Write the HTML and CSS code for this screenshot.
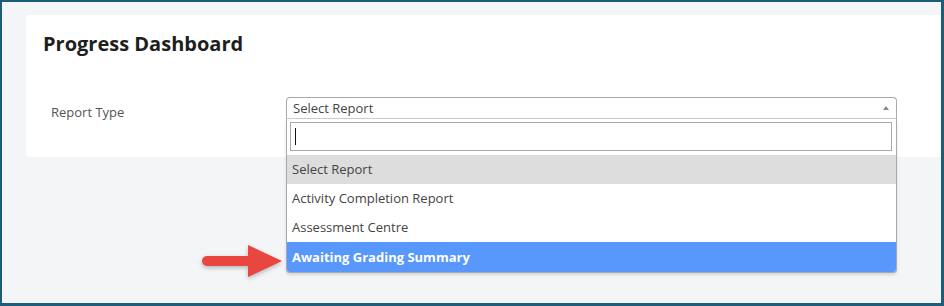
FILE: index.html
```html
<!DOCTYPE html>
<html>
<head>
<meta charset="utf-8">
<title>Progress Dashboard</title>
<link rel="stylesheet" href="styles.css">
</head>
<body>
<div id="frame">
  <div class="card">
    <h2 class="title">Progress Dashboard</h2>
    <div class="row">
      <label class="row-label">Report Type</label>
      <div class="select">
        <div class="select-box">
          <span>Select Report</span>
          <b class="caret-up"></b>
        </div>
        <div class="dropdown">
          <div class="search"><span class="cursor"></span></div>
          <ul class="options">
            <li class="opt selected">Select Report</li>
            <li class="opt">Activity Completion Report</li>
            <li class="opt">Assessment Centre</li>
            <li class="opt highlighted">Awaiting Grading Summary</li>
          </ul>
        </div>
      </div>
    </div>
  </div>

  <svg class="pointer" width="90" height="42" viewBox="0 0 90 42">
    <rect x="2" y="12" width="52" height="10" rx="5" fill="#e8463e"/>
    <polygon points="48,1 82,17 48,33" fill="#e8463e"/>
  </svg>
</div>
</body>
</html>
```

FILE: styles.css
```css
html, body{
    margin:0;
    padding:0;
}
body{
    font-family:"Open Sans", "Noto Sans", sans-serif;
    font-size:13px;
    color:#444;
}
#frame{
    position:relative;
    box-sizing:border-box;
    width:944px;
    height:306px;
    background:#f4f5f7;
    border:solid #1c5d7c;
    border-width:2px 3px 3px 2px;
    padding:13px 0 0 24px;
}
.card{
    background:white;
    border-radius:4px 0 0 4px;
    height:142px;
    padding:15px 0 0 17px;
    box-sizing:border-box;
}
.title{
    margin:0;
    font-size:20px;
    line-height:27px;
    font-weight:700;
    color:#1e1e1e;
}
.row{
    display:flex;
    align-items:flex-start;
    margin-top:40px;
}
.row-label{
    width:235px;
    padding-left:8px;
    color:#555;
    line-height:22px;
    padding-top:4px;
}
.select{
    position:relative;
    width:611px;
}
.select-box{
    box-sizing:border-box;
    height:22px;
    border:1px solid #aaa;
    border-bottom-color:#ccc;
    border-radius:4px 4px 0 0;
    padding:0 6px;
    line-height:20px;
    display:flex;
    justify-content:space-between;
    align-items:center;
    color:#444;
}
.caret-up{
    width:0;
    height:0;
    border-left:3px solid transparent;
    border-right:3px solid transparent;
    border-bottom:4px solid #888;
    margin-right:1px;
}
.dropdown{
    position:absolute;
    left:0;
    right:0;
    top:100%;
    z-index:10;
    background:white;
    border:1px solid #aaa;
    border-top:0;
    border-radius:0 0 4px 4px;
    box-shadow:0 2px 3px rgba(0,0,0,0.12);
}
.search{
    margin:3px 4px 4px 3px;
    height:29px;
    box-sizing:border-box;
    border:1px solid #aaa;
    display:flex;
    align-items:center;
    padding-left:4px;
}
.cursor{
    width:1px;
    height:17px;
    background:#111;
}
.options{
    list-style:none;
    margin:0;
    padding:0;
}
.opt{
    height:29px;
    line-height:29px;
    padding:0 5px;
    color:#444;
}
.opt.selected{
    background:#ddd;
}
.opt.highlighted{
    height:30px;
    line-height:30px;
    background:#5897fb;
    color:white;
    font-weight:700;
    border-radius:0 0 3px 3px;
}
.pointer{
    position:absolute;
    left:198px;
    top:242px;
    filter:drop-shadow(0 2px 2px rgba(0,0,0,0.25));
}
```
